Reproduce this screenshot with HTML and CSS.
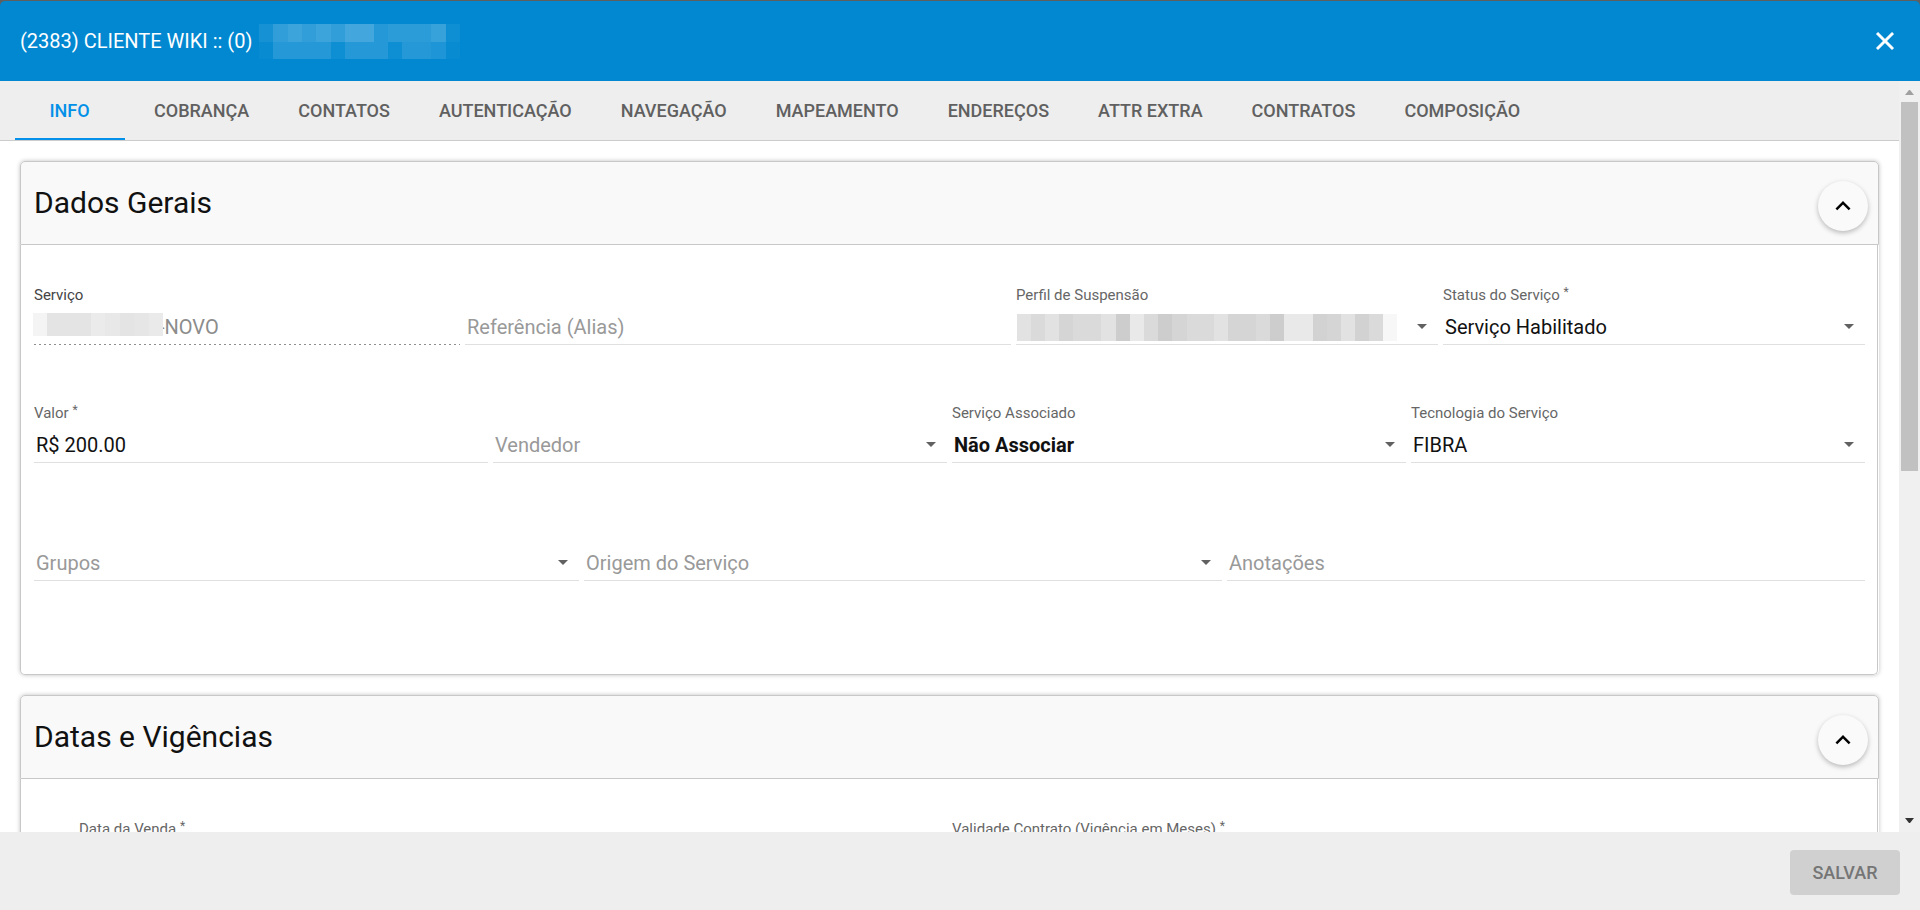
FILE: index.html
```html
<!DOCTYPE html>
<html lang="pt-BR">
<head>
<meta charset="utf-8">
<title>Cliente Wiki</title>
<link rel="stylesheet" href="styles.css">
</head>
<body>
<div class="dialog">
  <header class="toolbar">
    <h1 class="toolbar-title">(2383) CLIENTE WIKI :: (0)</h1>
    <svg class="toolbar-mask" viewBox="0 0 201 35" aria-hidden="true">
      <g fill="#fff">
        <path opacity=".08" d="M0 0h14v18H0z"/>
        <path opacity=".03" d="M0 18h14v17H0zM187 18h14v17h-14z"/>
        <path opacity=".05" d="M187 0h14v18h-14z"/>
        <path opacity=".19" d="M14 0h15v18H14zM43 0h14v18H43zM72 0h14v18H72z"/>
        <path opacity=".23" d="M29 0h14v18H29zM57 0h15v18H57z"/>
        <path opacity=".26" d="M86 0h29v18H86z"/>
        <path opacity=".14" d="M115 0h14v18h-14zM14 18h58v17H14zM86 18h43v17H86zM143 18h29v17h-29z"/>
        <path opacity=".17" d="M129 0h43v18h-43z"/>
        <path opacity=".21" d="M172 0h15v18h-15z"/>
        <path opacity=".05" d="M72 18h14v17H72zM129 18h14v17h-14z"/>
        <path opacity=".11" d="M172 18h15v17h-15z"/>
      </g>
    </svg>
    <button class="close" type="button" aria-label="Fechar">
      <svg viewBox="0 0 24 24" width="30" height="30"><path fill="#fff" stroke="#fff" stroke-width=".4" d="M19 6.41 17.59 5 12 10.59 6.41 5 5 6.41 10.59 12 5 17.59 6.41 19 12 13.41 17.59 19 19 17.59 13.41 12z"/></svg>
    </button>
  </header>

  <div class="middle">
    <main class="content">
      <nav class="tabs" role="tablist">
        <button class="tab tab-active" type="button" role="tab" aria-selected="true">INFO</button>
        <button class="tab" type="button" role="tab">COBRANÇA</button>
        <button class="tab" type="button" role="tab">CONTATOS</button>
        <button class="tab" type="button" role="tab">AUTENTICAÇÃO</button>
        <button class="tab" type="button" role="tab">NAVEGAÇÃO</button>
        <button class="tab" type="button" role="tab">MAPEAMENTO</button>
        <button class="tab" type="button" role="tab">ENDEREÇOS</button>
        <button class="tab" type="button" role="tab">ATTR EXTRA</button>
        <button class="tab" type="button" role="tab">CONTRATOS</button>
        <button class="tab" type="button" role="tab">COMPOSIÇÃO</button>
      </nav>

      <form class="sections" id="service-form">
        <section class="card">
          <div class="card-head">
            <h2 class="card-title">Dados Gerais</h2>
            <button class="fab" type="button" aria-label="Recolher Dados Gerais">
              <svg viewBox="0 0 24 24" width="30" height="30"><path d="M7.41 15.41 12 10.83l4.59 4.58L18 14l-6-6-6 6z"/></svg>
            </button>
          </div>
          <div class="card-body">
            <div class="row row-main">
              <div class="field">
                <label class="label label-strong" for="servico">Serviço</label>
                <div class="masked-control">
                  <svg class="name-mask" viewBox="0 0 130 23" aria-hidden="true">
                    <path fill="#f4f4f4" d="M0 0h14v23H0z"/><path fill="#e4e4e4" d="M14 0h44v23H14z"/><path fill="#ebebeb" d="M58 0h14v23H58z"/><path fill="#e8e8e8" d="M72 0h15v23H72z"/><path fill="#e4e4e4" d="M87 0h14v23H87z"/><path fill="#e6e6e6" d="M101 0h15v23h-15z"/><path fill="#eaeaea" d="M116 0h14v23h-14z"/>
                  </svg>
                  <input class="control control-disabled" id="servico" type="text" value="-NOVO" disabled>
                </div>
              </div>
              <div class="field">
                <input class="control" type="text" placeholder="Referência (Alias)" aria-label="Referência (Alias)">
              </div>
              <div class="field">
                <label class="label" for="perfil">Perfil de Suspensão</label>
                <div class="select-wrap">
                  <select class="control select" id="perfil"><option></option></select>
                  <svg class="profile-mask" viewBox="0 0 380 27" aria-hidden="true">
                    <path fill="#e2e2e2" d="M0 0h14v27H0zM28 0h14v27H28zM84 0h15v27H84zM197 0h14v27h-14zM324 0h14v27h-14z"/>
                    <path fill="#dadada" d="M14 0h14v27H14zM56 0h28v27H56zM127 0h14v27h-14zM170 0h27v27h-27zM239 0h14v27h-14zM352 0h14v27h-14z"/>
                    <path fill="#d5d5d5" d="M42 0h14v27H42zM155 0h15v27h-15zM211 0h28v27h-28zM310 0h14v27h-14z"/>
                    <path fill="#cdcdcd" d="M99 0h14v27H99zM141 0h14v27h-14zM253 0h14v27h-14z"/>
                    <path fill="#e9e9e9" d="M113 0h14v27h-14zM267 0h29v27h-29z"/>
                    <path fill="#d2d2d2" d="M296 0h14v27h-14zM338 0h14v27h-14z"/>
                    <path fill="#f7f7f7" d="M366 0h14v27h-14z"/>
                  </svg>
                </div>
              </div>
              <div class="field">
                <label class="label" for="status">Status do Serviço <span class="req">*</span></label>
                <select class="control select" id="status"><option>Serviço Habilitado</option></select>
              </div>
            </div>

            <div class="row row-quarters">
              <div class="field">
                <label class="label" for="valor">Valor <span class="req">*</span></label>
                <input class="control" id="valor" type="text" value="R$ 200.00">
              </div>
              <div class="field">
                <select class="control select select-empty" aria-label="Vendedor"><option>Vendedor</option></select>
              </div>
              <div class="field">
                <label class="label" for="associado">Serviço Associado</label>
                <select class="control select select-bold" id="associado"><option>Não Associar</option></select>
              </div>
              <div class="field">
                <label class="label" for="tecnologia">Tecnologia do Serviço</label>
                <select class="control select" id="tecnologia"><option>FIBRA</option></select>
              </div>
            </div>

            <div class="row row-thirds">
              <div class="field">
                <select class="control select select-empty" aria-label="Grupos"><option>Grupos</option></select>
              </div>
              <div class="field">
                <select class="control select select-empty" aria-label="Origem do Serviço"><option>Origem do Serviço</option></select>
              </div>
              <div class="field">
                <input class="control" type="text" placeholder="Anotações" aria-label="Anotações">
              </div>
            </div>
          </div>
        </section>

        <section class="card">
          <div class="card-head">
            <h2 class="card-title">Datas e Vigências</h2>
            <button class="fab" type="button" aria-label="Recolher Datas e Vigências">
              <svg viewBox="0 0 24 24" width="30" height="30"><path d="M7.41 15.41 12 10.83l4.59 4.58L18 14l-6-6-6 6z"/></svg>
            </button>
          </div>
          <div class="card-body">
            <div class="row row-halves">
              <div class="field field-date">
                <label class="label" for="venda">Data da Venda <span class="req">*</span></label>
                <input class="control" id="venda" type="text">
              </div>
              <div class="field">
                <label class="label" for="validade">Validade Contrato (Vigência em Meses) <span class="req">*</span></label>
                <input class="control" id="validade" type="text">
              </div>
            </div>
          </div>
        </section>
      </form>
    </main>

    <div class="scrollbar" aria-hidden="true">
      <svg class="scroll-arrow" viewBox="0 0 21 21"><path fill="#a0a0a0" d="M6 14h9l-4-5h-1z"/></svg>
      <div class="scroll-track"><div class="scroll-thumb"></div></div>
      <svg class="scroll-arrow" viewBox="0 0 21 21"><path fill="#333" d="M6 7h9l-4 5h-1z"/></svg>
    </div>
  </div>

  <footer class="actions">
    <button class="save" type="submit" form="service-form" disabled>SALVAR</button>
  </footer>
</div>
</body>
</html>
```

FILE: styles.css
```css
* {
  box-sizing: border-box;
}

body {
  margin: 0;
  background: #5f5f5f;
  color: #111;
  font-family: Roboto, "Liberation Sans", sans-serif;
}

button,
input,
select {
  font-family: inherit;
}

.dialog {
  display: flex;
  flex-direction: column;
  height: 100vh;
  padding-top: 1px;
}

/* Title bar */
.toolbar {
  display: flex;
  align-items: center;
  flex: none;
  height: 80px;
  padding: 0 20px;
  border-radius: 5px 5px 0 0;
  background: #0288d1;
  color: #fff;
}

.toolbar-title {
  margin: 0;
  font-size: 20px;
  font-weight: 400;
}

.toolbar-mask {
  width: 201px;
  height: 35px;
  margin-left: 7px;
}

.close {
  display: flex;
  margin-left: auto;
  padding: 0;
  border: 0;
  background: none;
}

/* Scrolling area */
.middle {
  display: flex;
  flex: 1;
  min-height: 0;
  background: #fff;
}

.content {
  flex: 1;
  min-width: 0;
  overflow-y: auto;
  scrollbar-width: none;
}

.tabs {
  display: flex;
  height: 60px;
  padding: 0 15px;
  border-bottom: 1px solid #ccc;
  background: #eee;
}

.tab {
  padding: 0 25px 0 24px;
  border: 0;
  background: none;
  color: #606060;
  font-size: 18px;
  font-weight: 500;
}

.tab-active {
  width: 110px;
  margin-right: 5px;
  border-top: 2px solid transparent;
  border-bottom: 2px solid #0390e8;
  color: #0390e8;
}

.sections {
  display: flex;
  flex-direction: column;
  gap: 20px;
  padding: 20px;
}

.card {
  border-radius: 5px;
  box-shadow: 0 0 4px rgba(0, 0, 0, 0.25);
}

.card-head {
  display: flex;
  align-items: center;
  justify-content: space-between;
  height: 84px;
  padding: 6px 10px 0 13px;
  border: 1px solid #c8c8c8;
  border-radius: 5px 5px 0 0;
  background: #f9f9f9;
}

.card-title {
  margin: 0;
  padding-bottom: 8px;
  font-size: 30px;
  font-weight: 400;
}

.fab {
  display: flex;
  align-items: center;
  justify-content: center;
  width: 50px;
  height: 50px;
  padding: 0;
  border: 0;
  border-radius: 50%;
  background: #fafafa;
  box-shadow: 0 2px 5px rgba(0, 0, 0, 0.26);
}

.card-body {
  display: flex;
  flex-direction: column;
  gap: 58px;
  margin-right: 1px;
  padding: 40px 12px 93px 13px;
  border: 1px solid #c8c8c8;
  border-top: 0;
  border-radius: 0 0 5px 5px;
  background: #fff;
}

/* Form rows */
.row {
  display: grid;
  align-items: end;
  column-gap: 5px;
  min-height: 60px;
}

.row-main {
  grid-template-columns: 426fr 546fr 422fr 422fr;
}

.row-quarters {
  grid-template-columns: repeat(4, 1fr);
}

.row-thirds {
  grid-template-columns: 545fr 638fr 638fr;
}

.row-halves {
  grid-template-columns: repeat(2, 1fr);
}

.field {
  display: flex;
  flex-direction: column;
  gap: 5px;
  min-width: 0;
}

.field-date {
  padding-left: 45px;
}

.label {
  color: #666;
  font-size: 15px;
  line-height: 20px;
}

.label-strong {
  color: #444;
}

.req {
  font-size: 12px;
  line-height: 14px;
  vertical-align: top;
}

.control {
  width: 100%;
  height: 35px;
  padding: 0 2px;
  border: 0;
  border-bottom: 1px solid #e0e0e0;
  border-radius: 0;
  outline: 0;
  background: none;
  color: #111;
  font-size: 20px;
}

.control::placeholder {
  color: #999;
  opacity: 1;
}

.select {
  appearance: none;
  padding-right: 32px;
  background: url("data:image/svg+xml,%3Csvg xmlns='http://www.w3.org/2000/svg' width='10' height='5'%3E%3Cpath fill='%23616161' d='M0 0h10L5 5z'/%3E%3C/svg%3E") no-repeat right 11px top 14px;
}

.select-empty {
  color: #999;
}

.select-bold {
  font-weight: 700;
}

.masked-control {
  display: flex;
  height: 35px;
  background: repeating-linear-gradient(90deg, #8e8e8e 0 2px, transparent 2px 5px) no-repeat bottom / 100% 1px;
}

.name-mask {
  position: relative;
  flex: none;
  width: 130px;
  height: 23px;
  margin: 3px -6px 0 -1px;
}

.control-disabled {
  border-bottom-color: transparent;
  color: #8c8c8c;
}

.select-wrap {
  position: relative;
}

.profile-mask {
  position: absolute;
  top: 4px;
  left: 1px;
  width: 380px;
  height: 27px;
}

/* Scrollbar */
.scrollbar {
  display: flex;
  flex-direction: column;
  flex: none;
  width: 21px;
  background: #f0f0f0;
}

.scroll-arrow {
  width: 21px;
  height: 21px;
}

.scroll-track {
  flex: 1;
  padding: 0 2px;
}

.scroll-thumb {
  height: 52%;
  background: #c1c1c1;
}

/* Bottom bar */
.actions {
  display: flex;
  align-items: center;
  justify-content: flex-end;
  flex: none;
  height: 78px;
  padding: 0 20px;
  background: #eee;
}

.save {
  width: 110px;
  height: 45px;
  margin-top: 3px;
  border: 0;
  border-radius: 4px;
  background: #d0d0d0;
  color: #757575;
  font-size: 18px;
  font-weight: 500;
}
```
